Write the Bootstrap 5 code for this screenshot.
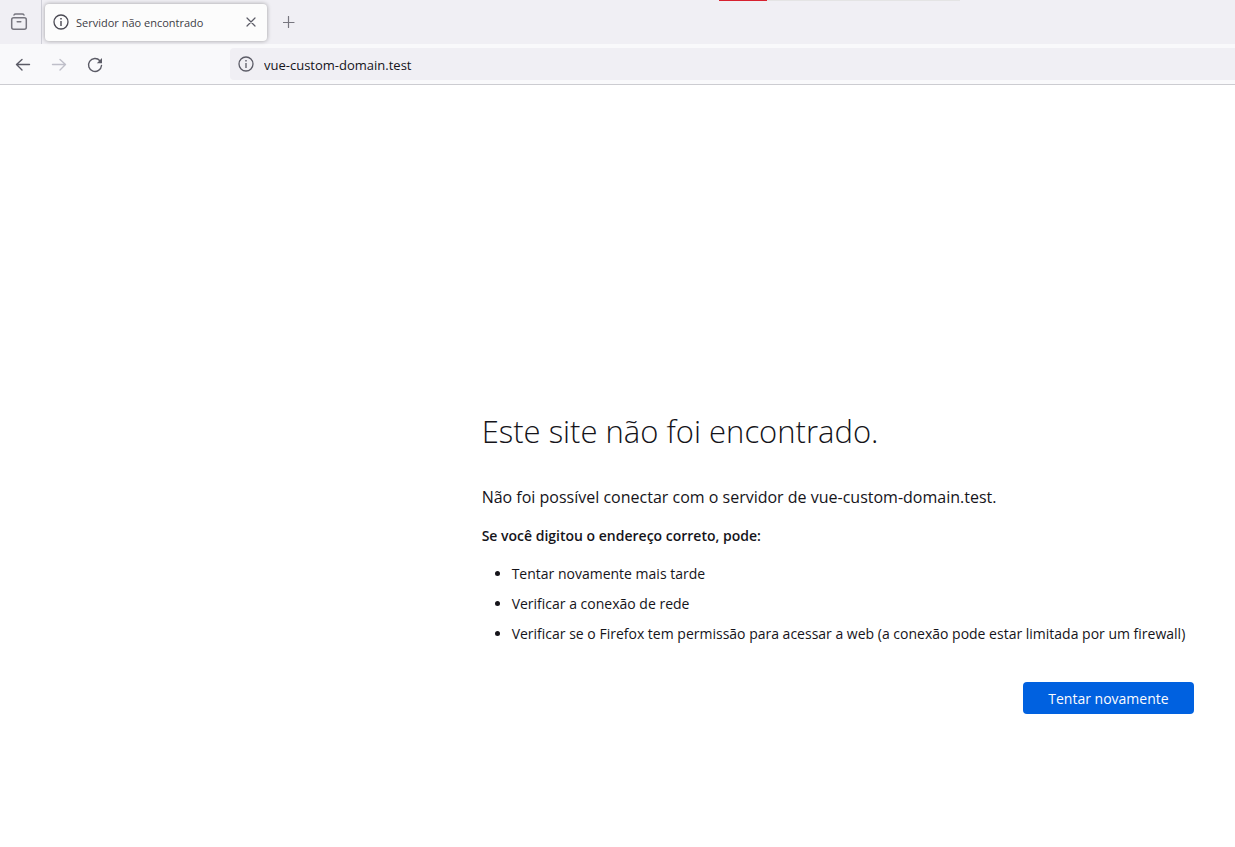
<!DOCTYPE html>
<html lang="pt-BR">
<head>
<meta charset="utf-8">
<meta name="viewport" content="width=device-width, initial-scale=1">
<title>Servidor não encontrado</title>
<link href="https://cdn.jsdelivr.net/npm/bootstrap@5.3.0/dist/css/bootstrap.min.css" rel="stylesheet">
<style>
  body { font-family: "Segoe UI", "Open Sans", "Noto Sans", sans-serif; color: #15141a; background: #fff; }
  .tab-strip { background: #f0eff4; height: 44px; }
  .icon-btn, .icon-btn:hover { color: #5b5b66; line-height: 1; }
  .icon-btn:disabled { color: #bfbfc9; border: 0; opacity: 1; }
  .view-btn, .view-btn:hover { width: 42px; border: 0; border-right: 1px solid #cfcfd8; border-radius: 0; color: #77767f; }
  .tab-item { width: 222px; height: 37px; margin-left: 3px; padding-left: 8px; background: #fcfcfc; border-radius: 4px; box-shadow: 0 0 4px rgba(0, 0, 0, .35); }
  .tab-title { font-size: 11px; line-height: 16px; padding-top: 2px; color: #3d3c45; margin-left: 7px; }
  .load-track { left: 719px; width: 241px; height: 1px; background: #e4e4e4; }
  .load-bar { width: 20%; height: 1px; background: #d7212f; }
  .nav-bar { background: #f9f9fb; height: 41px; border-bottom: 1px solid #ccccd1; padding-left: 5px; }
  .nav-btn { width: 36px; height: 32px; }
  .url-box { height: 32px; margin-left: 117px; padding-left: 8px; background: #f0eff4; color: #5b5b66; border-radius: 4px 0 0 4px; }
  .url-input { font-size: 13px; color: #15141a; margin-left: 10px; outline: 0; }
  .error-page { padding: 320px 3% 40px 39%; }
  .error-title { font-size: 31px; line-height: 52px; font-weight: 300; margin-bottom: 28px; }
  .error-lead { font-size: 16px; line-height: 24px; margin-bottom: 15px; }
  .error-text { font-size: 14px; line-height: 24px; }
  .hint-list { padding-left: 30px; margin: 14px 0 36px; }
  .hint-list li + li { margin-top: 6px; }
  .retry-btn { width: 171px; height: 32px; margin-right: 4px; font-size: 14px; font-weight: 500; background: #0061e0; color: #fbfbfe; border-radius: 4px; }
  .retry-btn:hover { background: #0250bb; color: #fbfbfe; }
</style>
</head>
<body>
<header class="position-relative">
  <div class="load-track position-absolute top-0"><div class="load-bar"></div></div>
  <div class="tab-strip d-flex align-items-center">
    <button type="button" class="btn icon-btn view-btn h-100 p-0 pe-1" aria-label="Abas recentes">
      <svg width="18" height="18" viewBox="0 0 18 18" fill="none" stroke="currentColor" stroke-width="1.5" stroke-linecap="round"><path d="M4 2c.4-.8.9-1 1.700-1h6.600c.8 0 1.300.2 1.700 1"/><rect x="1.700" y="4.800" width="14.600" height="11.400" rx="2"/><path d="M7.200 8.700h3.600"/></svg>
    </button>
    <div class="tab-item d-flex align-items-center">
      <svg width="16" height="16" viewBox="0 0 16 16" fill="none" stroke="#4a4953"><circle cx="8" cy="8" r="7" stroke-width="1.300"/><path d="M8 7v5" stroke-width="1.400"/><path d="M8 4v1.500" stroke-width="1.500"/></svg>
      <span class="tab-title flex-grow-1">Servidor não encontrado</span>
      <button type="button" class="btn icon-btn p-0 me-2 border-0" aria-label="Fechar aba">
        <svg class="d-block" width="16" height="16" viewBox="0 0 16 16" fill="none" stroke="currentColor" stroke-width="1.200" stroke-linecap="round"><path d="M4 4l8 8M12 4l-8 8"/></svg>
      </button>
    </div>
    <button type="button" class="btn icon-btn p-0 border-0 ms-3" aria-label="Nova aba">
      <svg class="d-block" width="12" height="12" viewBox="0 0 12 12" fill="none" stroke="#77767f" stroke-width="1.200" stroke-linecap="round"><path d="M5.500 .5v11M0 6.500h11"/></svg>
    </button>
  </div>
  <nav class="nav-bar d-flex align-items-center" aria-label="Navegação">
    <button type="button" class="btn icon-btn nav-btn p-0 border-0" aria-label="Voltar">
      <svg width="16" height="16" viewBox="0 0 16 16" fill="none" stroke="currentColor" stroke-width="1.400" stroke-linecap="round" stroke-linejoin="round"><path d="M14.500 7.500H1.500M7 2.500l-5.500 5 5.500 5.500"/></svg>
    </button>
    <button type="button" class="btn icon-btn nav-btn p-0" aria-label="Avançar" disabled>
      <svg width="16" height="16" viewBox="0 0 16 16" fill="none" stroke="currentColor" stroke-width="1.400" stroke-linecap="round" stroke-linejoin="round"><path d="M1.500 7.500h13M9 2.500l5.500 5-5.500 5.500"/></svg>
    </button>
    <button type="button" class="btn icon-btn nav-btn p-0 border-0" aria-label="Recarregar">
      <svg width="16" height="16" viewBox="0 0 16 16" fill="none" stroke="currentColor" stroke-width="1.400" stroke-linecap="round"><path d="M12.900 3.700A6.500 6.500 0 1 0 14.500 8.500"/><path d="M15 1v5.200H9.800z" fill="currentColor" stroke="none"/></svg>
    </button>
    <div class="url-box d-flex align-items-center flex-grow-1">
      <svg class="flex-shrink-0" width="16" height="16" viewBox="0 0 16 16" fill="none" stroke="currentColor"><circle cx="8" cy="8" r="7" stroke-width="1.300"/><path d="M8 7v5" stroke-width="1.300"/><path d="M8 4v1.500" stroke-width="1.400"/></svg>
      <input type="text" class="url-input border-0 bg-transparent p-0 pt-1 flex-grow-1" aria-label="Endereço" value="vue-custom-domain.test">
    </div>
  </nav>
</header>
<main class="error-page">
  <h1 class="error-title">Este site não foi encontrado.</h1>
  <p class="error-lead">Não foi possível conectar com o servidor de vue-custom-domain.test.</p>
  <p class="error-text fw-semibold mb-0">Se você digitou o endereço correto, pode:</p>
  <ul class="hint-list error-text">
    <li>Tentar novamente mais tarde</li>
    <li>Verificar a conexão de rede</li>
    <li>Verificar se o Firefox tem permissão para acessar a web (a conexão pode estar limitada por um firewall)</li>
  </ul>
  <div class="d-flex justify-content-end">
    <button type="button" class="btn retry-btn border-0 p-0">Tentar novamente</button>
  </div>
</main>
<script src="https://cdn.jsdelivr.net/npm/bootstrap@5.3.0/dist/js/bootstrap.bundle.min.js"></script>
</body>
</html>
